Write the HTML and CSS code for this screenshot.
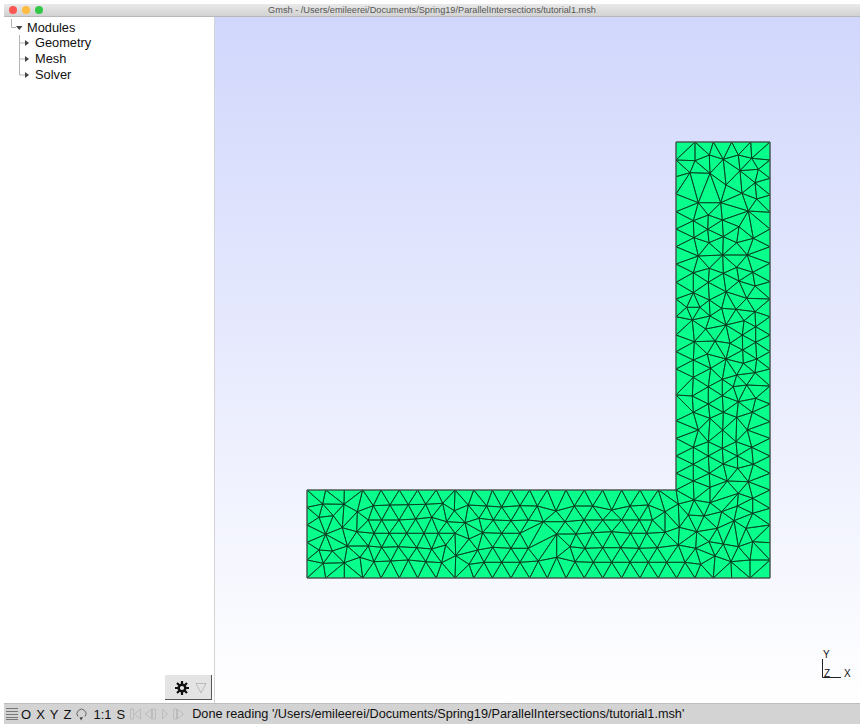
FILE: index.html
```html
<!DOCTYPE html>
<html lang="en">
<head>
    <meta charset="UTF-8">
    <title>Gmsh</title>
    <link rel="stylesheet" href="styles.css">
</head>
<body>
    <div class="window">
        <div class="titlebar">
            <div class="lights">
                <span class="light red"></span>
                <span class="light yellow"></span>
                <span class="light green"></span>
            </div>
            <span class="title">Gmsh - /Users/emileerei/Documents/Spring19/ParallelIntersections/tutorial1.msh</span>
        </div>

        <div class="main">
            <div class="sidebar">
                <div class="tree">
                    <div class="row">
                        <svg class="twig" width="23" height="16">
                            <path d="M7.5 0V8.5H12" fill="none" stroke="#b4b4b4"/>
                            <path d="M12 7H18.500L15.250 11Z" fill="#444"/>
                        </svg>
                        Modules
                    </div>
                    <div class="row">
                        <svg class="twig" width="31" height="16">
                            <path d="M15.5 0V16M15.5 8H21" fill="none" stroke="#b4b4b4"/>
                            <path d="M21 5V11L25 8Z" fill="#444"/>
                        </svg>
                        Geometry
                    </div>
                    <div class="row">
                        <svg class="twig" width="31" height="16">
                            <path d="M15.5 0V16M15.5 8H21" fill="none" stroke="#b4b4b4"/>
                            <path d="M21 5V11L25 8Z" fill="#444"/>
                        </svg>
                        Mesh
                    </div>
                    <div class="row">
                        <svg class="twig" width="31" height="16">
                            <path d="M15.5 0V8H21" fill="none" stroke="#b4b4b4"/>
                            <path d="M21 5V11L25 8Z" fill="#444"/>
                        </svg>
                        Solver
                    </div>
                </div>

                <div class="gear-button">
                    <svg width="16" height="16" viewBox="0 0 16 16">
                        <g stroke="#111" stroke-width="2.200">
                            <path d="M8 1V15M1 8H15M3 3L13 13M13 3L3 13"/>
                        </g>
                        <circle cx="8" cy="8" r="3.300" fill="#e4e4e4" stroke="#111" stroke-width="2.400"/>
                    </svg>
                    <svg width="12" height="12" viewBox="0 0 12 12">
                        <path d="M1 1.500H11L6 11Z" fill="none" stroke="#bbb"/>
                    </svg>
                </div>
            </div>

            <div class="canvas">
                <svg class="scene" width="645" height="686" viewBox="215 17 645 686">
                    <g id="mesh"></g>
                    <path d="M822.500 659V677.500H841" fill="none" stroke="#222"/>
                    <text class="axis" x="823" y="658">Y</text>
                    <text class="axis" x="824" y="677">Z</text>
                    <text class="axis" x="844" y="677">X</text>
                </svg>
            </div>
        </div>

        <div class="statusbar">
            <svg class="menu-icon" width="12" height="14">
                <path d="M0 1.500H12M0 4.500H12M0 7.500H12M0 10.500H12M0 12.500H12" stroke="#777"/>
            </svg>
            <span class="btn">O</span>
            <span class="btn">X</span>
            <span class="btn">Y</span>
            <span class="btn">Z</span>
            <svg class="rotate-icon" width="11" height="14">
                <path d="M2 9.500A4.500 4.500 0 1 1 9 9.500" fill="none" stroke="#666"/>
                <path d="M3.500 10.500L7 10L5 13.500Z" fill="#444"/>
            </svg>
            <span class="btn ratio">1:1</span>
            <span class="btn">S</span>
            <svg class="nav-icons" width="54" height="14">
                <g fill="none" stroke="#bbb">
                    <path d="M0.500 2V12H3.500V2Z"/>
                    <path d="M10.500 2V12L4.500 7Z"/>
                    <path d="M21.500 2V12L15.500 7Z"/>
                    <path d="M22.500 2V12H25.500V2Z"/>
                    <path d="M32.500 2V12L37.500 7Z"/>
                    <path d="M43.500 2V12H46.500V2Z"/>
                    <path d="M47.500 2V12L53.500 7Z"/>
                </g>
            </svg>
            <span class="message">Done reading '/Users/emileerei/Documents/Spring19/ParallelIntersections/tutorial1.msh'</span>
        </div>
    </div>

    <script src="mesh.js"></script>
</body>
</html>
```

FILE: styles.css
```css
* {
    padding: 0;
    margin: 0;
    box-sizing: border-box;
}
html, body {
    width: 100%;
    height: 100%;
    overflow: hidden;
    background: white;
    font-family: "Liberation Sans", Arial, sans-serif;
}
.window {
    height: 100vh;
    padding: 4px 0 4px 4px;
    display: flex;
    flex-direction: column;
}
.titlebar {
    height: 13px;
    flex: none;
    display: flex;
    align-items: center;
    justify-content: center;
    position: relative;
    background: linear-gradient(#e9e9e9, #d2d2d2);
    border-bottom: 1px solid #b8b8b8;
}
.title {
    font-size: 9.2px;
    color: #555;
}
.lights {
    position: absolute;
    left: 5px;
    top: 2px;
    display: flex;
    gap: 5px;
}
.light {
    width: 8px;
    height: 8px;
    border-radius: 50%;
}
.red { background: #fc5753; }
.yellow { background: #fdbc40; }
.green { background: #33c748; }

.main {
    flex: 1;
    display: flex;
    min-height: 0;
}
.sidebar {
    width: 211px;
    flex: none;
    display: flex;
    flex-direction: column;
    padding-top: 2.5px;
    border-right: 1px solid #d4d4d4;
}
.row {
    height: 15.8px;
    line-height: 15.8px;
    font-size: 12.8px;
    color: #111;
    display: flex;
    align-items: center;
    white-space: nowrap;
}
.twig {
    flex: none;
}
.gear-button {
    margin-top: auto;
    margin-right: 2px;
    margin-bottom: 3px;
    align-self: flex-end;
    width: 47px;
    height: 25px;
    display: flex;
    align-items: center;
    justify-content: center;
    gap: 5px;
    padding: 1px 0 0 5px;
    background: #e4e4e4;
    border-right: 1px solid #555;
    border-bottom: 1px solid #555;
}
.canvas {
    flex: 1;
    background: linear-gradient(#d1d7fc, #ffffff);
}
.scene {
    display: block;
}
.axis {
    font-size: 10px;
    fill: #111;
}

.statusbar {
    height: 21px;
    flex: none;
    display: flex;
    align-items: center;
    padding-left: 2px;
    background: #d3d3d3;
    border-top: 1px solid #bdbdbd;
    font-size: 13px;
    color: #111;
    white-space: nowrap;
}
.menu-icon {
    margin-right: 3px;
}
.btn {
    margin-right: 5px;
}
.rotate-icon {
    margin-right: 6px;
}
.ratio {
    margin-right: 5px;
}
.nav-icons {
    margin: 0 8px 0 0;
}
.message {
    font-size: 12.7px;
}
```

FILE: mesh.js
```js
// node positions read off the picture, one group per crop: [left, top, scale, points]
let groups = [
    [295, 480, 3, [
        37,31, 92,31, 148,31, 203,31, 258,31, 313,31, 368,31, 424,31, 480,31, 536,31, 592,31, 648,31, 704,31,
        37,82, 83,72, 147,73, 235,77, 285,75, 340,74, 392,73, 443,70, 520,75, 575,78, 620,81, 675,77,
        187,95, 115,107, 72,112, 37,135, 478,92,
        220,120, 260,120, 312,120, 362,117, 410,112, 455,125, 510,128, 552,115, 595,120, 648,122, 700,120,
        92,163, 142,143, 185,155, 237,160, 283,160, 335,160, 387,160, 430,160, 480,160, 522,177, 563,158, 620,160, 675,160,
        37,187, 37,240, 37,292,
        72,210, 112,213, 157,198, 220,198, 260,202, 310,200, 365,203, 410,207, 452,195, 548,210, 593,202, 648,205, 700,205,
        85,250, 148,248, 195,232, 237,245, 287,243, 340,240, 392,245, 440,248, 482,227, 522,253, 567,247, 620,247, 675,247,
        92,292, 148,292, 203,292, 258,292, 313,292, 368,292, 424,292, 480,292, 536,292, 592,292, 648,292, 704,292
    ]],
    [530, 480, 3, [
        52,31, 108,31, 163,31, 218,31, 275,31, 330,31, 385,31, 438,31,
        22,78, 78,93, 133,78, 188,78, 245,90, 300,78, 355,75, 405,95, 445,72, 492,60, 540,68, 575,95,
        540,22, 625,40, 668,55, 717,30, 622,78, 668,100, 717,85,
        40,125, 105,125, 162,120, 218,120, 275,120, 328,120, 367,120, 475,105, 522,108, 612,122, 717,135,
        80,162, 138,162, 188,158, 245,155, 302,160, 350,160, 405,157, 448,142, 500,155, 562,145, 648,145,
        120,200, 165,205, 218,203, 272,203, 327,205, 382,203, 445,195, 497,205, 537,185, 580,192, 625,200, 668,185, 717,188,
        25,243, 80,232, 135,245, 190,247, 245,247, 300,247, 355,247, 410,247, 465,247, 512,253, 555,228, 603,245, 660,240, 717,240,
        52,292, 108,292, 163,292, 218,292, 275,292, 330,292, 385,292, 440,292, 495,292, 550,292, 605,292, 660,292, 717,292
    ]],
    [660, 130, 3, [
        50,40, 105,40, 160,40, 215,40, 272,40, 327,40,
        50,90, 50,140, 50,192, 50,245, 50,297, 50,350, 327,90, 327,145, 327,195, 327,247, 327,297, 327,350,
        105,92, 148,75, 190,88, 240,122, 150,130, 90,128, 198,165, 246,190, 285,158, 290,207,
        115,218, 182,218, 100,272, 145,255, 187,270, 265,243, 235,75, 275,85, 295,118,
        237,290, 102,323, 143,298, 190,320, 230,338, 280,325, 147,338
    ]],
    [665, 250, 3, [
        35,42, 35,97, 37,147, 37,200, 37,255, 37,305, 37,357,
        100,18, 173,15, 247,15, 310,40, 85,68, 133,55, 175,70, 215,52, 263,67, 130,97, 222,93, 270,108, 310,95,
        85,128, 133,150, 183,125, 245,145, 310,147, 65,172, 105,172, 170,175, 213,178, 270,185,
        82,210, 135,198, 122,237, 183,225, 237,212, 272,230, 310,200, 88,275, 150,273, 195,280, 232,255, 272,277, 310,255,
        127,312, 183,327, 233,300, 275,327, 310,305, 85,330, 137,355, 235,340, 270,368, 310,357
    ]],
    [665, 370, 3, [
        35,25, 35,75, 35,100, 35,152, 35,205, 37,258, 35,310, 35,360,
        85,22, 140,20, 215,15, 270,8, 130,50, 172,28, 205,50, 245,45, 310,48, 82,78, 172,77, 220,95, 272,85, 130,102,
        85,127, 175,127, 262,127, 312,102, 135,145, 215,142, 312,155, 100,180, 173,180, 247,180, 312,205, 130,215, 213,215,
        85,232, 172,235, 260,232, 312,258, 130,258, 217,258, 85,283, 175,282, 265,283, 312,310, 133,310, 218,295,
        85,333, 187,333, 250,335, 135,360, 312,360, 225,372
    ]]
];

const LEFT = 307, RIGHT = 770, TOP = 142, ARM = 676, SHOULDER = 490, BOTTOM = 578;

function snap(v, target) {
    return Math.abs(v - target) < 4 ? target : v;
}

let nodes = [];
groups.forEach(([left, top, scale, list]) => {
    for (let i = 0; i < list.length; i += 2) {
        let x = left + list[i] / scale;
        let y = top + list[i + 1] / scale;
        x = snap(snap(x, LEFT), RIGHT);
        y = snap(snap(y, TOP), BOTTOM);
        if (y < SHOULDER + 4) x = snap(x, ARM);
        if (x < ARM + 1) y = snap(y, SHOULDER);
        // the crops overlap, keep the first reading of a node
        if (!nodes.some(n => Math.hypot(n[0] - x, n[1] - y) < 10)) nodes.push([x, y]);
    }
});

function inCircle(t, p) {
    let [ax, ay] = [t[0][0] - p[0], t[0][1] - p[1]];
    let [bx, by] = [t[1][0] - p[0], t[1][1] - p[1]];
    let [cx, cy] = [t[2][0] - p[0], t[2][1] - p[1]];
    let det = (ax * ax + ay * ay) * (bx * cy - cx * by)
        - (bx * bx + by * by) * (ax * cy - cx * ay)
        + (cx * cx + cy * cy) * (ax * by - bx * ay);
    let area = (t[1][0] - t[0][0]) * (t[2][1] - t[0][1]) - (t[2][0] - t[0][0]) * (t[1][1] - t[0][1]);
    return area > 0 ? det > 0 : det < 0;
}

// Bowyer-Watson
function triangulate(points) {
    let tris = [[[-9000, -9000], [9000, -9000], [0, 9000]]];
    points.forEach(p => {
        let bad = tris.filter(t => inCircle(t, p));
        tris = tris.filter(t => !bad.includes(t));
        let edges = new Map();
        bad.forEach(t => {
            [[t[0], t[1]], [t[1], t[2]], [t[2], t[0]]].forEach(([a, b]) => {
                let key = a[0] + a[1] * 1000 < b[0] + b[1] * 1000 ? a + "|" + b : b + "|" + a;
                edges.set(key, edges.has(key) ? null : [a, b]);
            });
        });
        edges.forEach(e => {
            if (e) tris.push([e[0], e[1], p]);
        });
    });
    return tris.filter(t => t.every(v => points.includes(v)));
}

function inside(t) {
    let x = (t[0][0] + t[1][0] + t[2][0]) / 3;
    let y = (t[0][1] + t[1][1] + t[2][1]) / 3;
    return x > LEFT && x < RIGHT && y > TOP && y < BOTTOM && (x > ARM || y > SHOULDER);
}

let tris = triangulate(nodes).filter(inside);
let d = tris.map(t => `M${t[0][0].toFixed(1)} ${t[0][1].toFixed(1)}L${t[1][0].toFixed(1)} ${t[1][1].toFixed(1)}L${t[2][0].toFixed(1)} ${t[2][1].toFixed(1)}Z`).join("");
let outline = `M${LEFT} ${SHOULDER}H${ARM}V${TOP}H${RIGHT}V${BOTTOM}H${LEFT}Z`;

document.getElementById("mesh").innerHTML =
    `<path d="${outline}" fill="#08ff8c"/>` +
    `<path d="${d}" fill="none" stroke="#07391f" stroke-width="0.75"/>` +
    `<path d="${outline}" fill="none" stroke="#555" stroke-width="1"/>`;
```
